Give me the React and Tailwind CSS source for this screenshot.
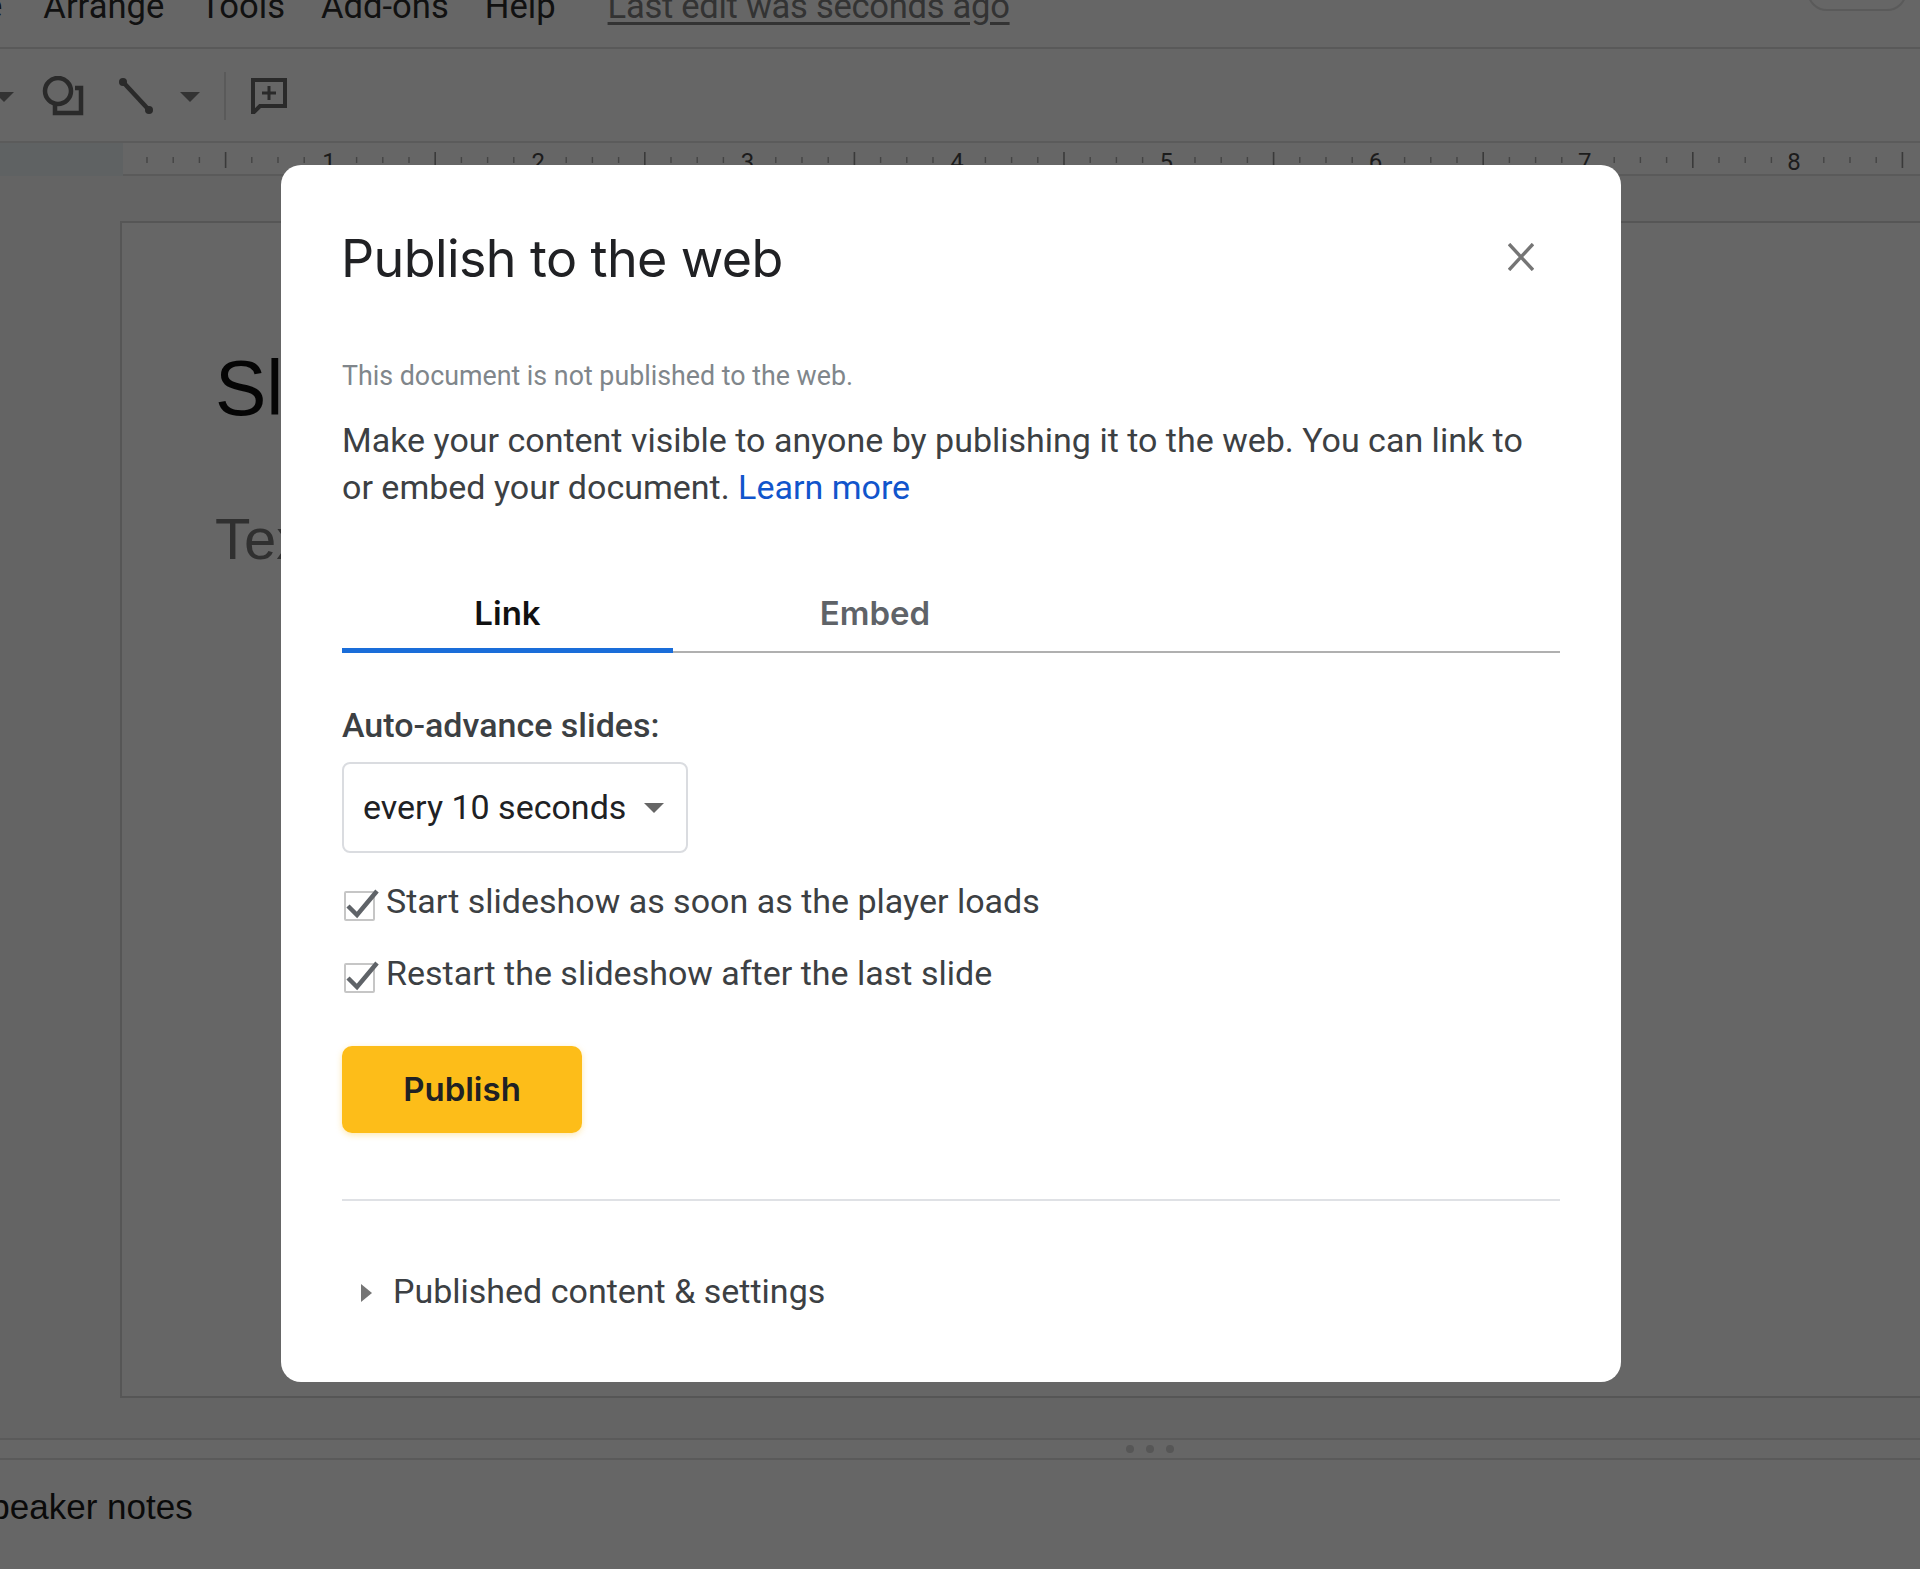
const roboto = "font-['Roboto',sans-serif]";
const arial = "font-['Liberation_Sans',Arial,sans-serif]";
const inter = "font-['Inter',sans-serif]";

const inches = [1, 2, 3, 4, 5, 6, 7, 8];

function Ruler() {
  const ticks = [];
  for (let i = 0; i < 70; i++) {
    const x = 147 + i * 26.2;
    const big = i % 8 === 3;
    if ((i + 1) % 8 === 0) continue;
    ticks.push(<line key={i} x1={x} x2={x} y1={big ? 9 : 14} y2={big ? 25 : 20} stroke={big ? "#3a3a3a" : "#444444"} strokeWidth={big ? 1.6 : 1.4} />);
  }
  return (
    <svg width="1920" height="33" className="block">
      <rect x="0" y="0" width="123" height="33" fill="#5f6263" />
      {ticks}
      {inches.map((n, i) => (
        <text key={n} x={329 + i * 209.3} y="27" textAnchor="middle" fontSize="24" fontFamily="Roboto, sans-serif" fill="#1c1c1c">
          {n}
        </text>
      ))}
    </svg>
  );
}

function Toolbar() {
  return (
    <div className="flex h-[94px] items-center border-b-2 border-[#5b5b5b]">
      <svg width="14" height="10" viewBox="0 0 14 10" className="mt-[3px]">
        <path d="M-6 0h20l-10 10z" fill="#333333" />
      </svg>
      <svg width="42" height="40" viewBox="0 0 42 40" className="ml-[28px] mt-[2px]">
        <circle cx="16" cy="15" r="13" fill="none" stroke="#2a2a2a" strokeWidth="4.5" />
        <path d="M33 12h6v25H13V29" fill="none" stroke="#2a2a2a" strokeWidth="4.5" />
      </svg>
      <svg width="36" height="36" viewBox="0 0 36 36" className="ml-[34px] mt-[2px]">
        <path d="M5 4l26 28" stroke="#2a2a2a" strokeWidth="4.5" />
        <circle cx="5" cy="4" r="4" fill="#2a2a2a" />
        <circle cx="31" cy="32" r="4" fill="#2a2a2a" />
      </svg>
      <svg width="20" height="10" viewBox="0 0 20 10" className="ml-[26px] mt-[3px]">
        <path d="M0 0h20l-10 10z" fill="#333333" />
      </svg>
      <div className="ml-[24px] mt-[2px] h-[48px] w-[2px] bg-[#5a5a5a]" />
      <svg width="36" height="36" viewBox="0 0 36 36" className="ml-[25px] mt-[2px]">
        <path d="M2 2h32v26H9l-7 7z" fill="none" stroke="#2a2a2a" strokeWidth="4" />
        <path d="M18 8v14M11 15h14" stroke="#2a2a2a" strokeWidth="3" />
      </svg>
    </div>
  );
}

function DocBackground() {
  return (
    <div className={`flex h-full flex-col ${roboto}`}>
      <div className="relative h-[49px] shrink-0 overflow-hidden border-b-2 border-[#595959]">
        <div className="-mt-[14px] -ml-[16px] flex items-center text-[34.6px] leading-[40px] whitespace-nowrap text-[#111111]">
          <span>e</span>
          <span className="ml-[41px]">Arrange</span>
          <span className="ml-[36px]">Tools</span>
          <span className="ml-[36px]">Add-ons</span>
          <span className="ml-[36px]">Help</span>
          <span className="ml-[52px] tracking-[-0.3px] text-[#333333] underline underline-offset-4">Last edit was seconds ago</span>
        </div>
        <div className="absolute -top-[30px] right-[13px] h-[41px] w-[100px] rounded-[20px] border-2 border-[#5a5a5a]" />
      </div>
      <Toolbar />
      <div className="h-[33px] shrink-0 border-b-2 border-[#5a5a5a]">
        <Ruler />
      </div>
      <div className="flex h-[1262px] shrink-0 flex-col bg-[#646464] pl-[120px] pt-[45px]">
        <div className="h-[1177px] border-y-2 border-l-2 border-[#565656] bg-[#666666] pl-[93px] pt-[125px]">
          <div className={`${arial} text-[77px] leading-[80px] text-[#050505]`}>Sl</div>
          <div className={`${arial} mt-[79px] text-[58px] leading-[64px] text-[#303030]`}>Tex</div>
        </div>
      </div>
      <div className="flex h-[22px] shrink-0 items-center justify-center gap-[12px] border-y-2 border-[#5a5a5a] pl-[380px]">
        <span className="h-[8px] w-[8px] rounded-full bg-[#565656]" />
        <span className="h-[8px] w-[8px] rounded-full bg-[#565656]" />
        <span className="h-[8px] w-[8px] rounded-full bg-[#565656]" />
      </div>
      <div className={`${arial} -ml-[33px] mt-[27px] text-[35px] leading-[40px] whitespace-nowrap text-[#0a0a0a]`}>Speaker notes</div>
    </div>
  );
}

function CheckRow({ label, className }) {
  return (
    <div className={`flex items-start ${className}`}>
      <div className="relative ml-[2px] mt-[10px] h-[30px] w-[31px] rounded-[2px] border-2 border-[#c6c6c6]">
        <svg width="38" height="34" viewBox="0 0 38 34" className="absolute -top-[5px] -left-[2px]">
          <path d="M4 18l9 9L33 3" fill="none" stroke="#5f6368" strokeWidth="4.5" />
        </svg>
      </div>
      <span className="ml-[11px] text-[34px] leading-[40px] text-[#3c4043]">{label}</span>
    </div>
  );
}

function PublishDialog() {
  return (
    <div className={`absolute left-[281px] top-[165px] flex h-[1217px] w-[1340px] flex-col rounded-[20px] bg-white px-[61px] pt-[62px] ${roboto}`}>
      <div className="flex h-[66px] items-center justify-between pr-[26px]">
        <h1 className={`${inter} -ml-[1px] mb-[2px] text-[52px] leading-[66px] tracking-[-0.6px] text-[#202124]`}>Publish to the web</h1>
        <svg width="26" height="28" viewBox="0 0 26 28" className="mb-[6px]">
          <path d="M1 1l24 26M25 1L1 27" fill="none" stroke="#757575" strokeWidth="3.4" />
        </svg>
      </div>

      <p className="mt-[67px] text-[26.8px] leading-[32px] text-[#80868b]">This document is not published to the web.</p>
      <p className="mt-[25px] w-[1218px] text-[34px] leading-[47px] text-[#3c4043]">
        Make your content visible to anyone by publishing it to the web. You can link to or embed your document.{" "}
        <span className="text-[#1155cc]">Learn more</span>
      </p>

      <div className="mt-[62px] flex h-[80px] border-b-2 border-[#b0b0b0]">
        <div className={`${inter} -mb-[2px] h-[80px] w-[331px] border-b-[5px] border-[#1a6dd9] pt-[20px] text-center text-[33px] leading-[40px] font-semibold text-[#111111]`}>Link</div>
        <div className={`${inter} h-[78px] w-[404px] pt-[20px] text-center text-[33px] leading-[40px] font-semibold text-[#5f6368]`}>Embed</div>
      </div>

      <div className="mt-[52px] text-[34px] leading-[40px] font-medium text-[#3c4043]">Auto-advance slides:</div>
      <div className="mt-[17px] flex h-[91px] w-[346px] items-center rounded-[8px] border-2 border-[#dadce0] pl-[19px]">
        <span className="mb-[2px] text-[34px] leading-[40px] text-[#202124]">every 10 seconds</span>
        <svg width="20" height="10" viewBox="0 0 20 10" className="ml-[18px]">
          <path d="M0 0h20l-10 10z" fill="#666666" />
        </svg>
      </div>

      <CheckRow className="mt-[28px]" label="Start slideshow as soon as the player loads" />
      <CheckRow className="mt-[32px]" label="Restart the slideshow after the last slide" />

      <button className={`${inter} mt-[53px] flex h-[87px] w-[240px] items-center justify-center rounded-[10px] bg-[#fdbd19] text-[33px] font-semibold text-[#202124] shadow-[0_2px_6px_rgba(253,189,25,0.35)]`}>
        Publish
      </button>

      <div className="mt-[66px] h-[2px] bg-[#dfe1e5]" />

      <div className="mt-[70px] flex items-center pl-[19px]">
        <svg width="11" height="18" viewBox="0 0 11 18" className="mt-[3px]">
          <path d="M0 0l11 9-11 9z" fill="#757575" />
        </svg>
        <span className="ml-[21px] text-[34px] leading-[40px] text-[#3c4043]">Published content &amp; settings</span>
      </div>
    </div>
  );
}

export default function App() {
  return (
    <div className="relative h-[1569px] w-[1920px] overflow-hidden bg-[#666666]">
      <DocBackground />
      <PublishDialog />
    </div>
  );
}
